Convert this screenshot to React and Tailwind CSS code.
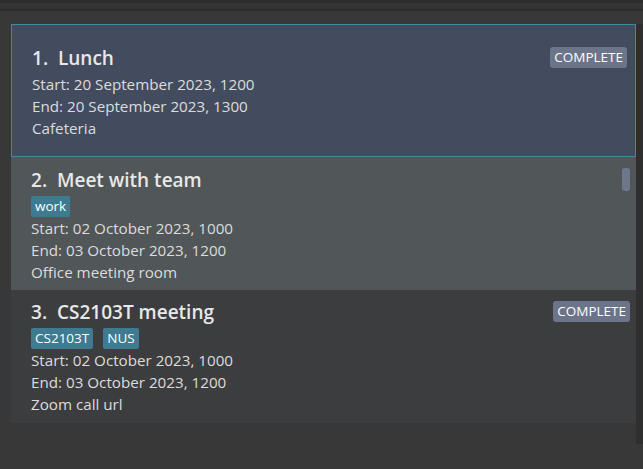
const events = [
  {
    n: 1,
    title: 'Lunch',
    tags: [],
    start: '20 September 2023, 1200',
    end: '20 September 2023, 1300',
    place: 'Cafeteria',
    complete: true,
  },
  {
    n: 2,
    title: 'Meet with team',
    tags: ['work'],
    start: '02 October 2023, 1000',
    end: '03 October 2023, 1200',
    place: 'Office meeting room',
    complete: false,
  },
  {
    n: 3,
    title: 'CS2103T meeting',
    tags: ['CS2103T', 'NUS'],
    start: '02 October 2023, 1000',
    end: '03 October 2023, 1200',
    place: 'Zoom call url',
    complete: true,
  },
]

const CARD_STYLE = [
  'bg-[#434c5e] border border-[#3c8aa0] pt-[20px]',
  'bg-[#515658] pt-[10px]',
  'bg-[#3c3d3f] pt-[9px]',
]

function EventCard({ ev, idx }) {
  return (
    <div className={`relative h-[133px] pl-[20px] ${CARD_STYLE[idx]}`}>
      <div className="text-[19px] leading-[26px] font-semibold text-[#e8e8e8]">
        {ev.n}.&nbsp;&nbsp;{ev.title}
      </div>
      {ev.tags.length > 0 && (
        <div className="flex gap-[10px] mt-[3px]">
          {ev.tags.map(t => (
            <span key={t} className="bg-[#3e7b91] text-white text-[13.5px] leading-[21px] h-[21px] px-[4px] rounded-[2px]">{t}</span>
          ))}
        </div>
      )}
      <div className={`text-[15.2px] leading-[22px] text-[#dcdcdc] ${idx === 0 ? 'mt-[2px]' : 'mt-0'}`}>
        <div>Start: {ev.start}</div>
        <div>End: {ev.end}</div>
        <div>{ev.place}</div>
      </div>
      {ev.complete && (
        <span className={`absolute ${idx === 0 ? 'top-[22px] right-[8px]' : 'top-[11px] right-[6px]'} bg-[#6b7489] text-white text-[13.5px] leading-[21px] px-[4px] rounded-[3px]`}>
          COMPLETE
        </span>
      )}
      {idx === 1 && (
        <div className="absolute top-[11px] right-[6px] w-[8px] h-[23px] rounded-[3px] bg-[#6e778b]" />
      )}
    </div>
  )
}

export default function App() {
  return (
    <div className="w-[643px] h-[469px] bg-[#383838] overflow-hidden" style={{ fontFamily: '"Open Sans", "Noto Sans", sans-serif' }}>
      <div className="h-[3px] bg-[#2c2c2c]" />
      <div className="h-[6px] bg-[#343434]" />
      <div className="h-[2px] bg-[#2c2c2c]" />
      <div className="flex pt-[13px]">
        <div className="w-[11px]" />
        <div className="w-[625px]">
          {events.map((ev, i) => <EventCard key={ev.n} ev={ev} idx={i} />)}
        </div>
        <div className="w-[7px] h-[420px] bg-[#2f2f2f]" />
      </div>
    </div>
  )
}
